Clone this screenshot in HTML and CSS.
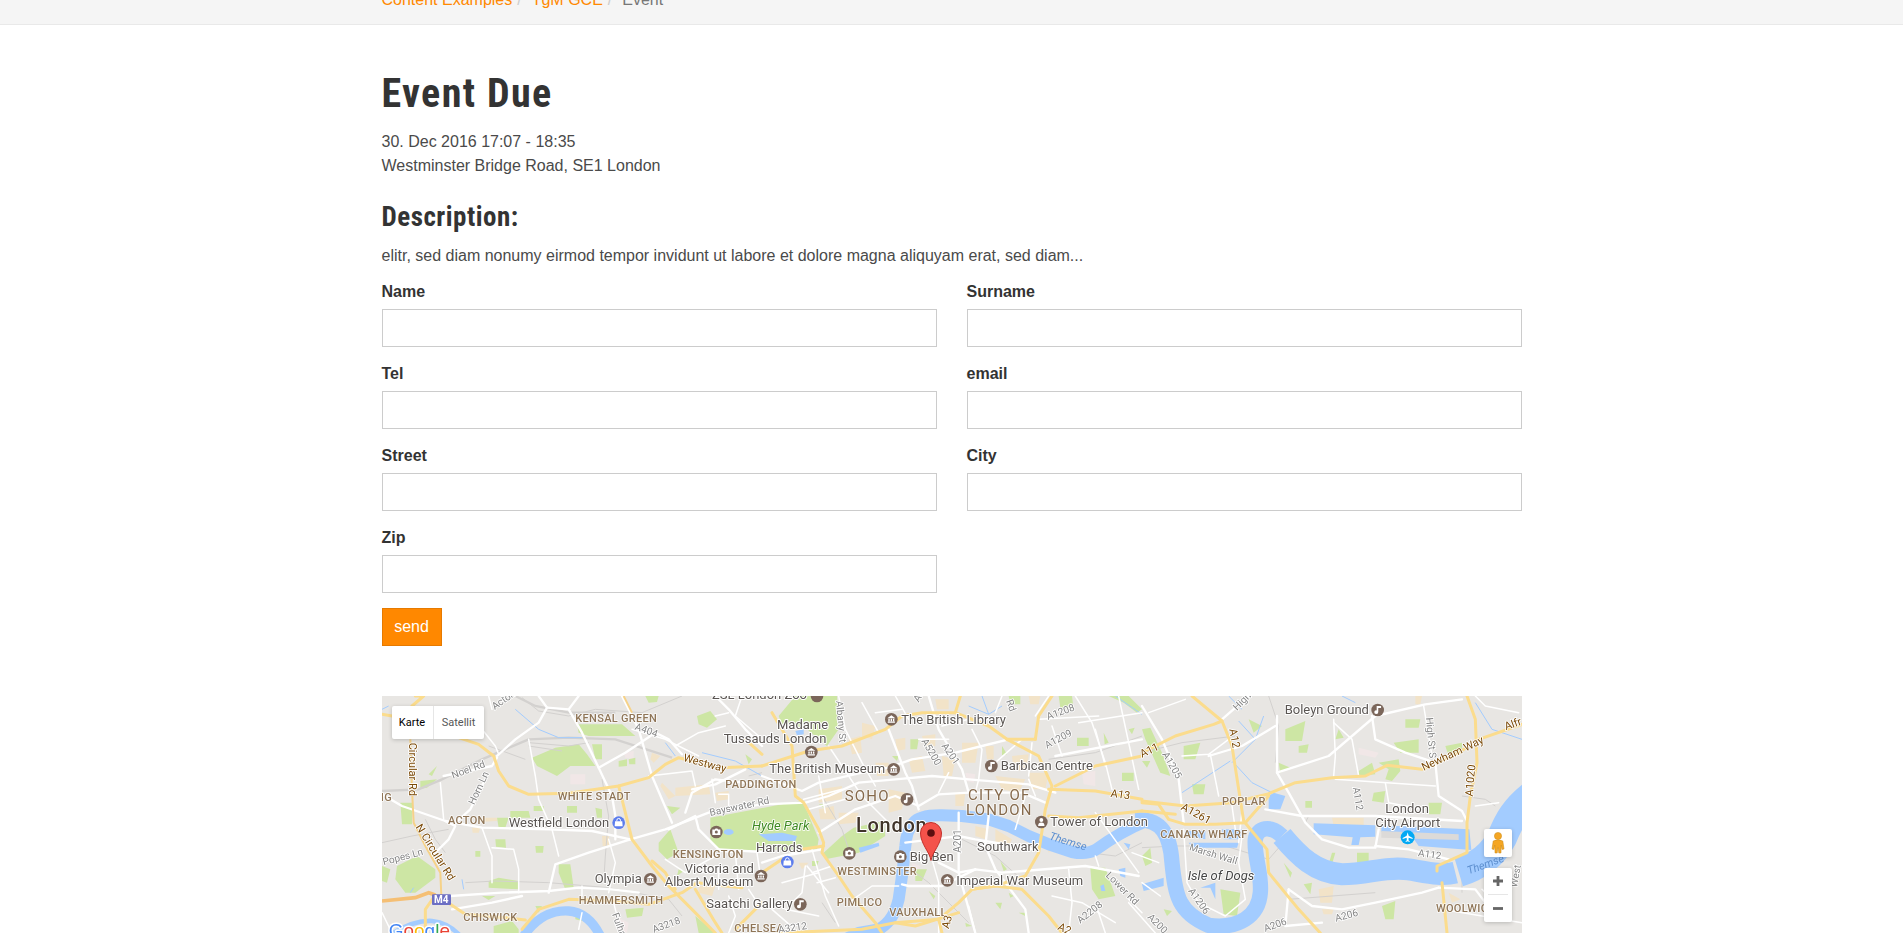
FILE: index.html
```html
<!DOCTYPE html>
<html lang="en">
<head>
<meta charset="utf-8">
<title>Event Due</title>
<link rel="stylesheet" href="styles.css">
</head>
<body>
<nav class="crumbbar">
  <ol class="crumbs">
    <li><a href="#">Content Examples</a><span class="sep">/</span></li>
    <li><a href="#">TgM GCE</a><span class="sep">/</span></li>
    <li class="current">Event</li>
  </ol>
</nav>
<main class="container">
  <h1>Event Due</h1>
  <p class="meta">30. Dec 2016 17:07 - 18:35<br>Westminster Bridge Road, SE1 London</p>
  <h2>Description:</h2>
  <p class="desc">elitr, sed diam nonumy eirmod tempor invidunt ut labore et dolore magna aliquyam erat, sed diam...</p>
  <form class="form">
    <div class="field"><label for="f1">Name</label><input id="f1" type="text"></div>
    <div class="field"><label for="f2">Surname</label><input id="f2" type="text"></div>
    <div class="field"><label for="f3">Tel</label><input id="f3" type="text"></div>
    <div class="field"><label for="f4">email</label><input id="f4" type="text"></div>
    <div class="field"><label for="f5">Street</label><input id="f5" type="text"></div>
    <div class="field"><label for="f6">City</label><input id="f6" type="text"></div>
    <div class="field"><label for="f7">Zip</label><input id="f7" type="text"></div>
    <div class="actions"><button type="button" class="send">send</button></div>
  </form>
  <div class="map">
    <svg class="mapart" viewBox="0 0 3420 711" width="1140" height="237" aria-label="Map of London">
      <defs>
        <g id="g-museum" transform="scale(3)"><path class="gl" d="M-4,-1.2 L0,-4 L4,-1.2 Z M-3.6,2.2 H3.6 V3.4 H-3.6 Z M-3,-.6 H-1.6 V1.8 H-3 Z M-.7,-.6 H.7 V1.8 H-.7 Z M1.6,-.6 H3 V1.8 H1.6 Z"/></g>
        <g id="g-cam" transform="scale(3)"><path class="gl" d="M-4,-2.6 H-1.6 L-.8,-3.6 H1 L1.8,-2.6 H4 V3 H-4 Z"/><circle class="glh" cx="0" cy="0" r="1.5"/></g>
        <g id="g-note" transform="scale(3)"><path class="gl" d="M-1,-4 L3.4,-4 V-2 L.6,-2 V2 A2,1.8 0 1 1 -1,.4 Z"/></g>
        <g id="g-bag" transform="scale(3)"><path class="gl" d="M-3.6,-1.4 H3.6 L4,3.6 H-4 Z"/><path class="gls" d="M-1.8,-1.4 V-2.4 A1.8,1.8 0 0 1 1.8,-2.4 V-1.4"/></g>
        <g id="g-person" transform="scale(3)"><circle class="gl" cx="0" cy="-2" r="1.9"/><path class="gl" d="M-3.2,4 A3.2,3.4 0 0 1 3.2,4 Z"/></g>
        <g id="g-plane" transform="scale(3)"><path class="gl" d="M0,-5 L1,-1.6 L5,.6 V1.6 L1,.4 L.8,3 L2,4 V4.6 L0,4 L-2,4.6 V4 L-.8,3 L-1,.4 L-5,1.6 V.6 L-1,-1.6 Z"/></g>
      </defs>

      <rect class="land" width="3420" height="711"/>

      <!-- built-up tint -->
      <g class="urban">
        <path d="M840,260 L880,300 L860,310 L835,270 Z M880,275 L980,265 L985,295 L880,300 Z M290,365 L345,365 L345,375 L290,378 Z M660,420 L680,420 L685,450 L662,450 Z M270,395 L295,395 L290,410 L272,410 Z M810,170 L835,180 L815,200 L805,190 Z M950,570 L1000,570 L990,600 L950,590 Z M1000,290 L1040,285 L1040,310 L1005,315 Z"/>
      </g>
      <g class="urban" transform="translate(1140,0)">
        <path d="M300,80 L340,90 L330,130 L300,120 Z M400,130 L430,125 L430,160 L405,165 Z M170,280 L240,270 L240,310 L170,320 Z M380,280 L430,290 L420,340 L380,350 Z M170,340 L215,330 L220,370 L175,370 Z M230,350 L290,350 L280,380 L230,385 Z M540,180 L580,190 L570,240 L545,240 Z M600,140 L650,140 L640,200 L600,200 Z M800,230 L860,230 L850,280 L810,280 Z M700,240 L790,250 L770,290 L720,280 Z M520,10 L560,10 L560,40 L525,40 Z M640,390 L680,400 L670,430 L640,420 Z M700,400 L750,430 L740,450 L700,440 Z M850,430 L880,450 L860,470 Z M110,500 L140,500 L120,520 Z M260,130 L295,120 L300,170 L270,175 Z M480,120 L520,115 L520,150 L490,155 Z M440,190 L480,180 L490,225 L450,230 Z M670,150 L695,150 L695,190 L675,190 Z M800,0 L835,0 L830,25 L805,25 Z M580,290 L610,290 L605,330 L580,330 Z M340,200 L380,200 L380,240 L345,240 Z M750,180 L800,175 L795,220 L755,225 Z"/>
      </g>
      <g class="urban" transform="translate(2280,0)">
        <path d="M570,365 L665,365 L665,390 L575,390 Z M530,580 L575,570 L570,620 L535,620 Z M820,0 L840,0 L835,25 L820,25 Z M540,640 L575,640 L570,655 L545,655 Z M920,590 L955,610 L930,620 Z"/>
      </g>
      <g class="pink">
        <path d="M565,235 L610,235 L610,265 L565,265 Z M725,170 L755,165 L755,190 L730,185 Z M700,660 L740,680 L735,711 L705,700 Z"/>
      </g>
      <g class="pink" transform="translate(1140,0)"><path d="M960,230 L1000,225 L1000,270 L965,265 Z M610,230 L640,235 L635,260 L615,255 Z M450,500 L475,510 L455,550 Z"/></g>
      <g class="pink" transform="translate(2280,0)"><path d="M650,155 L710,170 L700,185 L650,175 Z"/></g>

      <!-- parks -->
      <g class="park">
        <path d="M450,185 L520,155 L590,145 L615,175 L640,210 L565,210 L525,240 L465,210 Z"/>
        <path d="M630,145 L660,145 L660,190 L640,190 Z"/>
        <path d="M585,85 L720,85 L760,120 L620,120 L590,110 Z"/>
        <path d="M790,0 L830,0 L825,18 L800,20 Z"/>
        <path d="M945,60 L985,45 L1005,70 L975,95 L950,85 Z"/>
        <path d="M710,195 L735,190 L735,210 L710,212 Z M740,190 L760,185 L760,205 L742,205 Z"/>
        <path d="M55,320 L90,320 L90,385 L60,385 Z M115,255 L165,250 L135,275 L115,278 Z M140,235 L165,210 L150,240 Z"/>
        <path d="M345,365 L380,365 L370,395 L350,395 Z M385,345 L440,345 L445,365 L385,365 Z M455,330 L485,330 L485,345 L455,345 Z M555,330 L585,330 L585,350 L555,350 Z M640,335 L660,340 L660,365 L645,365 Z"/>
        <path d="M340,430 L370,430 L372,455 L342,452 Z M460,450 L485,450 L483,470 L462,470 Z M280,465 L295,465 L295,482 L280,482 Z"/>
        <path d="M530,505 L565,505 L575,575 L548,575 L530,530 Z"/>
        <path d="M45,510 L105,480 L160,520 L160,545 L100,590 L70,590 L40,550 Z M0,510 L25,520 L15,560 L0,555 Z"/>
        <path d="M320,555 L350,545 L410,555 L410,580 L320,575 Z M300,600 L340,600 L320,612 Z"/>
        <path d="M830,440 L865,400 L890,470 L855,490 L830,465 Z M855,330 L895,335 L870,355 Z"/>
        <path d="M460,630 L480,630 L470,650 Z M335,690 L390,675 L410,700 L410,711 L335,711 Z M730,640 L785,635 L780,660 L735,665 Z M580,650 L615,655 L600,675 L580,670 Z M890,520 L905,525 L885,540 Z M940,660 L1000,711 L950,711 Z M1090,175 L1110,190 L1100,205 Z"/>
      </g>
      <g class="park" transform="translate(1140,0)">
        <path d="M50,60 L100,0 L225,0 L230,100 L195,150 L130,95 L60,85 Z"/>
        <path d="M-155,365 L-20,340 L60,325 L120,315 L135,345 L170,430 L165,460 L-130,465 L-155,430 Z"/>
        <path d="M185,470 L240,420 L275,395 L365,375 L370,420 L290,470 L190,490 Z"/>
        <path d="M445,130 L470,130 L465,160 L445,160 Z M390,180 L410,180 L405,195 Z M170,325 L190,325 L185,335 Z M150,495 L170,495 L165,510 L150,510 Z"/>
        <path d="M460,520 L495,520 L480,555 L460,555 Z M500,585 L520,600 L515,610 Z M700,620 L720,620 L715,640 Z M740,590 L755,600 L745,605 Z M610,680 L630,690 L612,692 Z M770,650 L795,650 L790,660 Z M715,495 L735,520 L725,525 Z"/>
        <path d="M985,515 L1030,515 L1060,600 L1010,610 L990,580 Z M1080,230 L1115,230 L1115,255 L1080,255 Z M945,125 L980,125 L980,150 L945,150 Z M1025,110 L1040,140 L1028,145 Z M720,150 L735,175 L720,178 Z"/>
        <path d="M890,0 L930,0 L935,40 L895,35 Z M740,0 L775,0 L775,25 L745,25 Z M1040,0 L1100,0 L1140,40 L1125,50 L1085,20 Z M1100,100 L1118,95 L1110,115 Z"/>
      </g>
      <g class="park" transform="translate(2280,0)">
        <path d="M125,150 L175,140 L160,190 L125,190 Z M430,100 L490,75 L480,135 L430,135 Z M470,150 L500,145 L495,170 L470,170 Z M410,200 L445,215 L415,230 Z M320,70 L360,90 L335,110 Z"/>
        <path d="M150,265 L190,265 L185,295 L155,295 Z M490,315 L510,315 L510,335 L490,335 Z M0,195 L25,195 L15,215 Z M0,100 L25,95 L60,170 L85,240 L55,230 L10,130 Z"/>
        <path d="M590,100 L605,125 L580,130 Z M755,140 L830,130 L830,170 L775,170 Z M910,150 L960,140 L960,170 L920,180 Z M790,70 L835,70 L830,95 L790,95 Z"/>
        <path d="M650,225 L690,200 L700,235 L650,240 Z M710,200 L770,190 L775,225 L750,255 L730,250 L740,220 Z M695,290 L730,285 L725,320 L690,315 Z M860,320 L900,320 L895,355 L860,355 Z"/>
        <path d="M570,470 L580,470 L570,505 L560,505 Z M645,470 L680,470 L680,500 L645,500 Z M425,500 L450,530 L445,545 Z M485,565 L510,560 L505,595 Z M235,580 L295,590 L285,660 L245,655 Z M720,630 L760,615 L755,670 L730,670 Z"/>
        <path d="M0,480 L25,455 L30,500 L10,510 Z M65,640 L90,645 L75,660 Z M120,580 L130,600 L118,610 Z"/>
      </g>

      <!-- rail and minor grey lines -->
      <g class="railb">
        <path d="M400,0 L460,30 L560,50 L700,50"/>
        <path d="M440,130 L560,125 L700,130 L870,185"/>
        <path d="M0,285 L110,280 L180,250 L300,190 L440,130"/>
      </g>
      <g class="rail">
        <path d="M420,5 L470,45 L560,60 L640,40 L780,50 L900,0"/>
        <path d="M440,140 L560,150 L620,140"/>
        <path d="M440,150 L540,165"/>
        <path d="M320,150 L430,190"/>
        <path d="M130,370 L160,430 L190,470"/>
        <path d="M0,440 L90,420 L200,400"/>
        <path d="M250,560 L340,555 L500,560 L680,575 L860,610 L900,660"/>
        <path d="M660,250 L680,360 L670,480 L665,560"/>
        <path d="M1100,240 L1140,230"/>
      </g>
      <g class="rail" transform="translate(1140,0)">
        <path d="M180,300 L240,400 L260,460"/>
        <path d="M460,530 L500,560 L620,680"/>
        <path d="M860,190 L1000,170 L1140,120"/>
        <path d="M600,430 L700,480 L790,560"/>
        <path d="M180,620 L220,680"/>
        <path d="M1140,440 L1060,480 L980,470"/>
      </g>
      <g class="rail" transform="translate(2280,0)">
        <path d="M0,170 L120,140 L280,120"/>
        <path d="M0,455 L100,450 L250,450 L380,490 L450,410"/>
        <path d="M380,0 L390,30 L410,90 L400,200"/>
        <path d="M500,360 L490,380 L540,430"/>
        <path d="M440,610 L570,600 L700,590"/>
        <path d="M960,300 L1030,310 L1060,330"/>
        <path d="M960,530 L960,590"/>
      </g>

      <!-- thames and other water -->
      <g class="river">
        <path class="w28" d="M425,720 Q480,640 560,645 Q620,650 655,720"/>
        <path class="w14" d="M20,720 Q90,672 150,675 Q200,680 235,720"/>
      </g>
      <g class="river" transform="translate(1140,0)">
        <path class="w36" d="M250,730 L290,711 L350,700 C385,680 400,650 410,610 L420,540 C425,500 428,470 430,450 C432,420 440,395 455,380 C470,362 500,357 540,358 L600,360 L680,370 L740,390 L800,420 L860,445 L930,468 C960,474 985,470 1000,462 C1030,440 1080,405 1160,372"/>
      </g>
      <g class="river" transform="translate(2280,0)">
        <path class="w46" d="M-20,372 C60,365 85,420 90,500 C100,600 110,650 200,688 C290,700 350,660 355,590 C360,530 335,480 340,430 C345,395 385,385 420,420"/>
        <path class="w66" d="M420,420 C470,480 520,530 600,535 C680,535 730,510 800,520 C860,530 900,540 940,530"/>
        <path class="w90" d="M950,528 C1010,510 1050,480 1080,425 C1100,375 1120,340 1170,300"/>
      </g>
      <g class="water" transform="translate(2280,0)">
        <path d="M515,382 L700,388 L700,422 L655,424 L650,447 L628,447 L632,424 L515,415 Z"/>
        <path d="M718,388 L982,400 L988,462 L830,450 L815,428 L718,408 Z"/>
        <path d="M130,405 L190,405 L190,430 L130,420 Z M240,400 L300,400 L295,430 L245,430 Z M140,440 L290,440 L285,455 L150,455 Z M0,565 L65,545 L65,570 L5,585 Z M175,575 L220,560 L220,610 L205,575 Z"/>
        <path d="M380,300 L395,290 L430,300 L415,340 L380,340 Z"/>
      </g>
      <path class="airstrip" transform="translate(2280,0)" d="M718,405 L950,415 L950,432 L718,425 Z"/>
      <g class="water" transform="translate(1140,0)">
        <path d="M-10,415 L60,410 L105,420 L100,435 L20,435 Z"/>
        <path d="M290,455 L350,440 L352,450 L295,470 Z"/>
        <path d="M100,105 L125,100 L125,115 L105,118 Z"/>
        <path d="M1070,520 L1090,515 L1090,545 L1075,540 Z M1015,570 L1025,565 L1030,585 L1018,585 Z M1085,440 L1105,445 L1100,460 Z"/>
      </g>
      <ellipse class="pond" cx="1040" cy="408" rx="15" ry="9"/>
      <g class="canal">
        <path d="M400,40 L470,100 L530,125 L600,125"/>
        <path d="M850,140 L880,180"/>
        <path d="M960,170 L1060,195 L1140,240"/>
        <path d="M0,40 L20,30"/>
        <path d="M240,550 L245,580"/>
        <path d="M85,590 L95,575"/>
      </g>
      <g class="canal" transform="translate(2280,0)">
        <path d="M275,200 L330,260 L390,290"/>
        <path d="M290,75 L340,130"/>
        <path d="M365,60 L340,130 L270,200"/>
        <path d="M120,290 L265,195"/>
        <path d="M1000,20 L1050,100 L1140,130"/>
        <path d="M260,0 L300,40 M600,0 L640,20"/>
      </g>
      <g class="canal" transform="translate(1140,0)">
        <path d="M620,30 L680,55 L720,30 M660,0 L680,55"/>
        <path d="M1060,0 L1140,55"/>
      </g>

      <!-- white streets: minor -->
      <g class="stb">
        <path d="M440,130 L460,240 L470,310 L510,400 L530,480"/>
        <path d="M175,260 L185,370"/>
        <path d="M300,395 L330,480 L330,560"/>
        <path d="M330,455 L395,460 L410,520 L410,590"/>
        <path d="M680,430 L700,500 L680,590"/>
        <path d="M600,570 L600,600"/>
        <path d="M690,600 L700,640 L720,711"/>
        <path d="M990,250 L1000,320"/>
        <path d="M1010,295 L1040,295 L1040,330"/>
        <path d="M800,240 L930,225 L940,270"/>
        <path d="M1000,60 L1040,50"/>
        <path d="M880,150 L950,110 L1030,90"/>
        <path d="M1060,470 L1070,580 M1125,470 L1135,540"/>
        <path d="M1060,470 L1010,465"/>
        <path d="M850,490 L910,530 L1000,480"/>
        <path d="M300,100 L340,150 L350,175"/>
        <path d="M320,0 L330,40"/>
        <path d="M0,650 L30,711"/>
        <path d="M600,650 L590,700"/>
        <path d="M750,100 L850,130 L950,180"/>
        <path d="M960,530 L1010,510 L1010,580"/>
        <path d="M1040,600 L1060,660 L1040,711"/>
        <path d="M1100,580 L1140,640"/>
        <path d="M1080,0 L1060,60 L1130,120"/>
      </g>
      <g class="stb" transform="translate(1140,0)">
        <path d="M230,0 L250,100 L300,200 L340,270"/>
        <path d="M200,150 L300,300 L380,380"/>
        <path d="M125,310 L240,280 M140,340 L250,310 M170,240 L190,350"/>
        <path d="M135,510 L200,590 M150,530 L210,510 M165,560 L220,545"/>
        <path d="M720,0 L700,50 M810,140 L800,240"/>
        <path d="M630,100 L660,160 L650,250 L640,290"/>
        <path d="M860,0 L820,60"/>
        <path d="M950,80 L1140,50 M830,70 L1010,60"/>
        <path d="M1000,100 L1030,210"/>
        <path d="M1070,0 L1130,280"/>
        <path d="M940,0 L990,80 L1030,200 L1050,280"/>
        <path d="M1000,480 L1010,510 M1000,350 L1130,530"/>
        <path d="M620,630 L640,711"/>
        <path d="M870,600 L960,620 L1060,680"/>
        <path d="M150,460 L190,600 L230,690"/>
        <path d="M130,510 L120,590 L90,620"/>
        <path d="M510,490 L530,560 L530,711"/>
        <path d="M340,50 L420,40 M300,20 L350,110 M400,0 L440,70 M540,90 L620,70 L700,70"/>
        <path d="M470,130 L560,130 M560,230 L530,290 M700,200 L780,130"/>
        <path d="M820,300 L800,250 M870,90 L900,180 M760,400 L790,300"/>
        <path d="M260,620 L330,570 L410,570"/>
        <path d="M60,560 L170,530 M70,640 L170,660 M30,640 L110,710"/>
        <path d="M920,520 L930,620 L920,711 M1000,620 L1030,711 M1100,610 L1140,650"/>
      </g>
      <g class="stb" transform="translate(2280,0)">
        <path d="M20,50 L130,10"/>
        <path d="M205,175 L230,300"/>
        <path d="M120,180 L200,175 L260,130"/>
        <path d="M575,70 L580,180 L575,240"/>
        <path d="M575,80 L630,130 L650,240"/>
        <path d="M845,30 L870,180"/>
        <path d="M580,250 L880,270"/>
        <path d="M730,260 L740,320 L840,340"/>
        <path d="M300,345 L290,440 M270,330 L280,400"/>
        <path d="M125,400 L135,560 L170,620 L250,660 L310,610 L290,500 L300,420"/>
        <path d="M900,640 L1140,680"/>
        <path d="M1000,330 L1070,320"/>
        <path d="M-30,470 L50,500 M0,560 L55,600 M-40,620 L40,711"/>
        <path d="M1020,580 L1040,600 M1000,0 L1030,30 L1130,50"/>
      </g>

      <!-- white streets: major -->
      <g class="sta">
        <path d="M470,0 L495,35 L470,80 L400,130 L345,180"/>
        <path d="M495,35 L560,40 L600,110 L650,215 L690,300 L700,360 L700,430"/>
        <path d="M560,40 L590,0"/>
        <path d="M650,215 L730,170 L820,110 L860,130 L900,175"/>
        <path d="M0,295 L60,330 L190,375 L300,395 L500,400 L630,405 L745,430"/>
        <path d="M745,430 L850,400 L980,350 L1140,325"/>
        <path d="M745,430 L620,470 L520,505 L500,590"/>
        <path d="M190,375 L220,390 L200,430 L150,480"/>
        <path d="M310,250 L280,310 L265,340 L215,385"/>
        <path d="M185,240 L330,210 L345,185"/>
        <path d="M205,600 L360,590 L500,585 L590,575 L690,580 L770,590"/>
        <path d="M210,640 L330,620 L420,600"/>
        <path d="M720,0 L770,100 L810,240 L870,380"/>
        <path d="M860,400 L940,360 L950,400 L1010,460"/>
        <path d="M910,350 L930,290 L1000,250 L1130,265"/>
        <path d="M930,280 L1000,265 L1090,220"/>
        <path d="M1000,0 L1040,40 L1090,100 L1140,150"/>
        <path d="M1010,460 L1140,468"/>
      </g>
      <g class="sta" transform="translate(1140,0)">
        <path d="M0,325 L130,320 L200,300 L290,260 L400,250 L510,240 L620,250 L800,265 L880,290"/>
        <path d="M0,240 L120,285 L170,260 L300,230 L380,215 L450,190 L580,170 L660,150 L740,130"/>
        <path d="M170,410 L280,340 L400,300 L470,330 L530,295 L620,290 L780,290 L850,320"/>
        <path d="M470,340 L450,270 L430,230 L380,100"/>
        <path d="M500,0 L530,100 L600,220 L620,290"/>
        <path d="M590,350 L590,430 L590,530 L640,711"/>
        <path d="M680,360 L670,450 L700,520 L790,640 L800,711"/>
        <path d="M430,440 L510,430 L590,420 L640,430 L820,460"/>
        <path d="M530,500 L590,530 L640,520 L720,530 L970,510 L1130,540"/>
        <path d="M640,520 L540,570 L440,570 L420,565"/>
        <path d="M0,500 L60,480 L180,460"/>
        <path d="M880,180 L1140,130"/>
      </g>
      <g class="sta" transform="translate(2280,0)">
        <path d="M0,30 L60,130 L110,250 L125,380"/>
        <path d="M320,0 L240,70"/>
        <path d="M200,180 L300,150 L400,90"/>
        <path d="M405,60 L405,230 L440,290 L490,380 L540,430 L620,455 L700,455 L710,400"/>
        <path d="M700,450 L800,460 L880,480 L920,490"/>
        <path d="M405,230 L560,180 L700,60 L850,25 L960,10"/>
        <path d="M690,60 L700,130 L790,170 L880,200 L890,300 L960,345 L975,375"/>
        <path d="M370,340 L480,360 L700,360 L960,375"/>
        <path d="M440,580 L430,690 L540,680"/>
        <path d="M440,580 L510,630 L600,640 L700,620 L840,590 L890,575"/>
        <path d="M890,575 L1000,580 L1030,620"/>
      </g>

      <!-- yellow main roads -->
      <g class="hw">
        <path d="M0,55 L30,60"/>
        <path d="M230,125 L290,145 L335,180 L350,225 L380,270 L440,295 L560,292 L710,270 L800,245 L850,205 L890,185 L1015,215 L1140,210"/>
        <path d="M710,270 L730,350 L750,430 L810,510 L860,570 L930,640 L1000,711"/>
        <path d="M810,495 L850,530 L880,580"/>
        <path d="M205,625 L250,655 L370,665 L430,672"/>
        <path d="M160,597 L130,640 L130,711"/>
        <path d="M420,700 L470,640 L560,610 L700,615 L800,625 L900,590 L945,560 L1080,575"/>
        <path d="M940,580 L1000,680 L1020,711"/>
        <path d="M1140,620 L1060,700"/>
        <path d="M100,0 L125,0 L90,30"/>
        <path d="M1090,130 L1140,175"/>
      </g>
      <path class="hwthin" d="M85,130 L90,280 L95,380 L130,450 L175,530 L178,600"/>
      <path class="hwthin" d="M725,0 L750,50"/>
      <path class="m4" d="M0,615 L100,605 L140,590 L160,597"/>
      <g class="hw" transform="translate(1140,0)">
        <path d="M0,210 L140,165 L240,150 L370,100 L420,60 L480,50 L580,50 L680,90 L735,130 L820,130"/>
        <path d="M735,130 L830,180 L870,270 L850,340 L830,470 L790,540 L700,570 L630,580 L590,620 L530,670 L400,680 L300,700 L50,711"/>
        <path d="M30,50 L90,150 L100,300 L125,320 L170,400 L185,440 L180,470 L230,540 L270,600 L340,680 L360,711"/>
        <path d="M185,450 L120,460"/>
        <path d="M0,530 L60,490"/>
        <path d="M860,280 L1000,285 L1140,310"/>
        <path d="M880,270 L1000,210 L1140,180"/>
        <path d="M820,130 L830,60 L870,0"/>
        <path d="M580,50 L595,0"/>
        <path d="M630,580 L700,570 L780,580 L860,660 L900,711"/>
        <path d="M530,670 L540,711"/>
        <path d="M860,360 L950,365 L1140,345"/>
        <path d="M400,680 L460,690 L590,650"/>
      </g>
      <g class="hw" transform="translate(2280,0)">
        <path d="M150,0 L240,75 L270,150 L290,280 L305,375 L375,460 L380,530 L470,640 L535,711"/>
        <path d="M0,170 L100,120 L215,85 L240,75"/>
        <path d="M0,315 L130,330 L270,320 L375,295 L460,260 L570,245 L670,240 L735,208 L840,220 L950,170 L1010,130 L1140,85"/>
        <path d="M0,320 L50,325 L80,370 L130,385 L220,385 L310,380 L380,300"/>
        <path d="M0,345 L100,355"/>
        <path d="M975,0 L1000,70 L1005,200 L985,300 L975,380 L975,470 L885,510 L885,525"/>
        <path d="M900,560 L915,711"/>
      </g>

      <!-- area names -->
      <g class="area">
        <text x="30" y="315" class="end">EALING</text>
        <text x="580" y="77">KENSAL GREEN</text>
        <text x="527" y="311">WHITE STADT</text>
        <text x="198" y="384">ACTON</text>
        <text x="872" y="485">KENSINGTON</text>
        <text x="590" y="624">HAMMERSMITH</text>
        <text x="244" y="675">CHISWICK</text>
        <text x="1030" y="275">PADDINGTON</text>
        <text x="1057" y="708">CHELSEA</text>
        <text x="1366" y="537">WESTMINSTER</text>
        <text x="1364" y="630">PIMLICO</text>
        <text x="1522" y="660">VAUXHALL</text>
        <text x="2520" y="326">POPLAR</text>
        <text x="2335" y="425">CANARY WHARF</text>
        <text x="3162" y="648">WOOLWICH</text>
      </g>
      <g class="area big">
        <text x="1388" y="315">SOHO</text>
        <text x="1758" y="312">CITY OF</text>
        <text x="1752" y="357">LONDON</text>
      </g>
      <text class="city" x="1422" y="408">London</text>

      <!-- road names -->
      <g class="road">
        <text transform="translate(338,42) rotate(-35)">Acton</text>
        <text transform="translate(757,100) rotate(20)">A404</text>
        <text transform="translate(213,248) rotate(-20)">Noel Rd</text>
        <text transform="translate(277,328) rotate(-65)">Horn Ln</text>
        <text transform="translate(5,508) rotate(-15)">Popes Ln</text>
        <text transform="translate(985,360) rotate(-12)">Bayswater Rd</text>
        <text transform="translate(690,655) rotate(70)">Fulham</text>
        <text transform="translate(815,711) rotate(-20)">A3218</text>
        <text transform="translate(1362,15) rotate(85)">Albany St</text>
        <text transform="translate(1618,135) rotate(60)">A5200</text>
        <text transform="translate(1678,150) rotate(55)">A201</text>
        <text transform="translate(1998,72) rotate(-20)">A1208</text>
        <text transform="translate(1995,158) rotate(-28)">A1209</text>
        <text transform="translate(1737,470) rotate(-90)">A201</text>
        <text transform="translate(1610,20) rotate(-60)">A5</text>
        <text transform="translate(1872,15) rotate(70)">Rd</text>
        <text transform="translate(2170,540) rotate(45)">Lower Rd</text>
        <text transform="translate(2095,683) rotate(-38)">A2208</text>
        <text transform="translate(1190,711) rotate(-8)">A3212</text>
        <text transform="translate(2565,45) rotate(-45)">High</text>
        <text transform="translate(2340,175) rotate(60)">A1205</text>
        <text transform="translate(2420,462) rotate(17)">Marsh Wall</text>
        <text transform="translate(2418,585) rotate(55)">A1206</text>
        <text transform="translate(2295,665) rotate(45)">A200</text>
        <text transform="translate(3132,65) rotate(85)">High St S</text>
        <text transform="translate(2912,275) rotate(80)">A112</text>
        <text transform="translate(3107,480) rotate(8)">A112</text>
        <text transform="translate(2862,677) rotate(-15)">A206</text>
        <text transform="translate(2650,708) rotate(-20)">A206</text>
        <text transform="translate(3405,575) rotate(-80)">West</text>
      </g>
      <g class="hwlabel">
        <text transform="translate(902,195) rotate(15)">Westway</text>
        <text transform="translate(80,140) rotate(90)">Circular Rd</text>
        <text transform="translate(100,393) rotate(58)">N Circular Rd</text>
        <text transform="translate(2185,302) rotate(8)">A13</text>
        <text transform="translate(2395,340) rotate(28)">A1261</text>
        <text transform="translate(2280,185) rotate(-25)">A11</text>
        <text transform="translate(2542,100) rotate(80)">A12</text>
        <text transform="translate(3272,302) rotate(-85)">A1020</text>
        <text transform="translate(3125,225) rotate(-25)">Newham Way</text>
        <text transform="translate(3372,103) rotate(-20)">Alfr</text>
        <text transform="translate(1700,700) rotate(-75)">A3</text>
        <text transform="translate(2025,700) rotate(25)">A2</text>
      </g>
      <g class="themse">
        <text transform="translate(2000,430) rotate(17)">Themse</text>
        <text transform="translate(3260,535) rotate(-20)">Themse</text>
      </g>

      <!-- places -->
      <g class="poi">
        <text x="990" y="10">ZSL London Zoo</text>
        <text x="1185" y="100">Madame</text>
        <text x="1025" y="140">Tussauds London</text>
        <text x="1558" y="85">The British Library</text>
        <text x="1162" y="232">The British Museum</text>
        <text x="380" y="392">Westfield London</text>
        <text x="1122" y="468">Harrods</text>
        <text x="908" y="532">Victoria and</text>
        <text x="848" y="570">Albert Museum</text>
        <text x="638" y="562">Olympia</text>
        <text x="973" y="637">Saatchi Gallery</text>
        <text x="1583" y="495">Big Ben</text>
        <text x="1723" y="567">Imperial War Museum</text>
        <text x="1856" y="222">Barbican Centre</text>
        <text x="2005" y="390">Tower of London</text>
        <text x="1785" y="465">Southwark</text>
        <text x="2708" y="55">Boleyn Ground</text>
        <text x="3010" y="352">London</text>
        <text x="2980" y="392">City Airport</text>
      </g>
      <text class="poi-it" x="1110" y="403">Hyde Park</text>
      <text class="poi-dog" x="2417" y="553">Isle of Dogs</text>

      <!-- poi markers -->
      <g class="pin-b">
        <circle cx="1305" cy="0" r="19"/><circle cx="1528" cy="70" r="19"/><circle cx="1288" cy="168" r="19"/>
        <circle cx="1535" cy="220" r="19"/><circle cx="1575" cy="310" r="19"/><circle cx="1003" cy="408" r="19"/>
        <circle cx="1137" cy="540" r="19"/><circle cx="805" cy="550" r="19"/><circle cx="1255" cy="625" r="19"/>
        <circle cx="1402" cy="472" r="19"/><circle cx="1555" cy="482" r="19"/><circle cx="1696" cy="553" r="19"/>
        <circle cx="1828" cy="210" r="19"/><circle cx="1978" cy="378" r="19"/><circle cx="2987" cy="42" r="19"/>
      </g>
      <circle class="pin-shop" cx="710" cy="380" r="19"/>
      <circle class="pin-shop" cx="1216" cy="498" r="19"/>
      <circle class="pin-air" cx="3077" cy="424" r="21"/>
      <use href="#g-museum" x="1528" y="70"/><use href="#g-museum" x="1288" y="168"/><use href="#g-museum" x="1535" y="220"/>
      <use href="#g-note" x="1575" y="310"/><use href="#g-cam" x="1003" y="408"/><use href="#g-museum" x="1137" y="540"/>
      <use href="#g-museum" x="805" y="550"/><use href="#g-note" x="1255" y="625"/><use href="#g-cam" x="1402" y="472"/>
      <use href="#g-cam" x="1555" y="482"/><use href="#g-museum" x="1696" y="553"/><use href="#g-note" x="1828" y="210"/>
      <use href="#g-person" x="1978" y="378"/><use href="#g-note" x="2987" y="42"/>
      <use href="#g-bag" x="710" y="380"/><use href="#g-bag" x="1216" y="498"/><use href="#g-plane" x="3077" y="424"/>

      <!-- M4 shield -->
      <rect class="shield" x="150" y="595" width="57" height="32" rx="3"/>
      <text class="shield-t" x="178" y="621">M4</text>

      <!-- Google mark -->
      <text class="google" x="20" y="723"><tspan class="g-b">G</tspan><tspan class="g-r">o</tspan><tspan class="g-y">o</tspan><tspan class="g-b">g</tspan><tspan class="g-g">l</tspan><tspan class="g-r">e</tspan></text>
    </svg>

    <svg class="marker" viewBox="0 0 22 39" width="22" height="39" aria-hidden="true">
      <path class="marker-body" d="M11,38.5 C9.8,30 .5,22 .5,11 A10.5,10.5 0 0 1 21.5,11 C21.5,22 12.2,30 11,38.5 Z"/>
      <circle class="marker-dot" cx="11" cy="11" r="3.8"/>
    </svg>

    <div class="maptype"><span class="mt-on">Karte</span><span class="mt-off">Satellit</span></div>

    <div class="pegman">
      <svg viewBox="0 0 28 28" width="28" height="28" aria-hidden="true">
        <circle class="peg" cx="14" cy="7" r="3.6"/>
        <path class="peg" d="M9.2,12 Q14,9.4 18.8,12 L20,20 L18,20.5 L17.2,16 L17,24 L14.8,24 L14,18.5 L13.2,24 L11,24 L10.8,16 L10,20.5 L8,20 Z"/>
      </svg>
    </div>
    <div class="zoom">
      <svg viewBox="0 0 28 26" width="28" height="26" aria-hidden="true"><path class="zm" d="M12.6,8 H15.4 V11.6 H19 V14.4 H15.4 V18 H12.6 V14.4 H9 V11.6 H12.6 Z"/></svg>
      <span class="zoom-rule"></span>
      <svg viewBox="0 0 28 27" width="28" height="27" aria-hidden="true"><rect class="zm" x="9" y="12.1" width="10" height="2.8"/></svg>
    </div>
  </div>
</main>
</body>
</html>
```

FILE: styles.css
```css
* { box-sizing: border-box; }
html, body { margin: 0; height: 933px; overflow: hidden; background: #fff; }
body { font-family: "Liberation Sans", Arial, sans-serif; font-size: 16px; line-height: 24px; color: #333; }

.crumbbar { height: 25px; background: #f5f5f5; border-bottom: 1px solid #e9e9e9; display: flex; align-items: flex-end; padding-bottom: 12px; }
.crumbs { list-style: none; margin: 0 auto; padding: 0; width: 1140px; display: flex; }
.crumbs li { display: flex; }
.crumbs a { color: #ff8800; text-decoration: none; }
.sep { color: #ccc; padding: 0 10px 0 5px; }
.current { color: #777; }

.container { width: 1140px; margin: 0 auto; }
h1, h2 { font-family: Roboto, sans-serif; font-stretch: 75%; font-weight: 700; color: #333; margin: 0; }
h1 { font-size: 40px; line-height: 44px; letter-spacing: 1.4px; margin-top: 47px; }
h2 { font-size: 27px; line-height: 30px; letter-spacing: .5px; margin-top: 24px; }
.meta { margin: 14px 0 0; color: #4a4a4a; }
.desc { margin: 12px 0 0; color: #4a4a4a; }

.form { display: grid; grid-template-columns: 555px 555px; column-gap: 30px; row-gap: 15px; margin-top: 12px; }
.field { display: flex; flex-direction: column; }
.field label { font-weight: 700; height: 29px; line-height: 24px; }
.field input { height: 38px; border: 1px solid #ccc; background: #fff; padding: 6px 12px; font: inherit; }
.actions { grid-column: 1 / -1; }
.send { width: 60px; height: 38px; background: #ff8800; border: 1px solid #e67a00; color: #fff; font: inherit; padding: 0; display: block; }

.map { position: relative; width: 1140px; height: 237px; margin-top: 50px; overflow: hidden; background: #e8e6e3; }
.mapart { display: block; overflow: hidden; filter: blur(.35px); }

.land { fill: #e8e6e3; }
.urban path { fill: #f2e3c8; }
.pink path { fill: #f1e7e7; }
.park path { fill: #cde6a4; }
.railb path { fill: none; stroke: #d3d1cf; stroke-width: 7; }
.rail path { fill: none; stroke: #d3d1cf; stroke-width: 3; }
.airstrip { fill: #dcdad8; }
.river path { fill: none; stroke: #a3ccff; stroke-linejoin: round; }
.w14 { stroke-width: 14; }
.w28 { stroke-width: 28; }
.w36 { stroke-width: 36; }
.w46 { stroke-width: 46; }
.w66 { stroke-width: 66; }
.w90 { stroke-width: 90; }
.water path, .pond { fill: #a3ccff; }
.canal path { fill: none; stroke: #a3ccff; stroke-width: 3; }
.sta path { fill: none; stroke: #fff; stroke-width: 7; stroke-linejoin: round; stroke-linecap: round; }
.stb path { fill: none; stroke: #fff; stroke-width: 4.5; stroke-linejoin: round; stroke-linecap: round; }
.hw path { fill: none; stroke: #fbdc8d; stroke-width: 9; stroke-linejoin: round; stroke-linecap: round; }
.hwthin { fill: none; stroke: #f6d288; stroke-width: 6; }
.m4 { fill: none; stroke: #f5bf74; stroke-width: 11; }

.mapart text { font-family: Roboto, sans-serif; paint-order: stroke; stroke-linejoin: round; }
.area text { font-size: 33px; font-weight: 500; fill: #8f7557; stroke: #fff; stroke-width: 5px; stroke-opacity: .75; letter-spacing: .9px; }
.area text.end { text-anchor: end; }
.area.big text { font-size: 45px; letter-spacing: 3.6px; font-weight: 400; fill: #85694b; }
.city { font-size: 60px; font-weight: 500; fill: #40342a; stroke: #fff; stroke-width: 6px; letter-spacing: 2.2px; }
.road text { font-size: 30px; fill: #858585; stroke: #fff; stroke-width: 5px; }
.hwlabel text { font-size: 33px; fill: #7b4a08; stroke: #fff; stroke-width: 5px; }
.themse text { font-size: 33px; fill: #5d8fcf; font-style: italic; }
.poi text { font-size: 39px; fill: #5a5552; stroke: #fff; stroke-width: 6px; }
.poi-it { font-size: 39px; font-style: italic; fill: #3f8a22; stroke: #fff; stroke-width: 5px; }
.poi-dog { font-size: 39px; font-style: italic; fill: #444; stroke: #fff; stroke-width: 5px; }

.pin-b circle { fill: #7b665a; }
.pin-shop { fill: #5c7ded; }
.pin-air { fill: #03a9f4; }
.gl { fill: #fff; }
.glh { fill: #7b665a; }
.gls { fill: none; stroke: #fff; stroke-width: 1; }
.shield { fill: #6c6fc4; }
.mapart .shield-t { font-size: 30px; font-weight: 700; fill: #fff; text-anchor: middle; }
.mapart .google { font-family: "Liberation Sans", sans-serif; font-size: 57px; stroke: #fff; stroke-width: 9px; }
.g-b { fill: #4285f4; }
.g-r { fill: #ea4335; }
.g-y { fill: #fbbc05; }
.g-g { fill: #34a853; }

.marker { position: absolute; left: 538px; top: 126px; }
.marker-body { fill: #f4524a; stroke: #c4302a; stroke-width: 1; }
.marker-dot { fill: #5c0f0f; }

.maptype { position: absolute; left: 10px; top: 10px; height: 33px; width: 92px; background: #fff; border-radius: 2px; display: flex; align-items: center; font-family: Roboto, sans-serif; font-size: 11px; line-height: 33px; box-shadow: 0 1px 4px rgba(0,0,0,.2); }
.mt-on { width: 42px; text-align: center; color: #000; border-right: 1px solid #e6e6e6; }
.mt-off { width: 50px; text-align: center; color: #565656; }

.pegman { position: absolute; left: 1102px; top: 133px; width: 28px; height: 28px; background: #fff; border-radius: 2px; box-shadow: 0 1px 4px rgba(0,0,0,.2); }
.pegman svg, .zoom svg { display: block; }
.peg { fill: #f5a623; stroke: #c98a1a; stroke-width: .5; }
.zoom { position: absolute; left: 1102px; top: 172px; width: 28px; height: 54px; background: #fff; border-radius: 2px; box-shadow: 0 1px 4px rgba(0,0,0,.2); }
.zoom-rule { display: block; height: 1px; margin: 0 4px; background: #e6e6e6; }
.zm { fill: #666; }
```
